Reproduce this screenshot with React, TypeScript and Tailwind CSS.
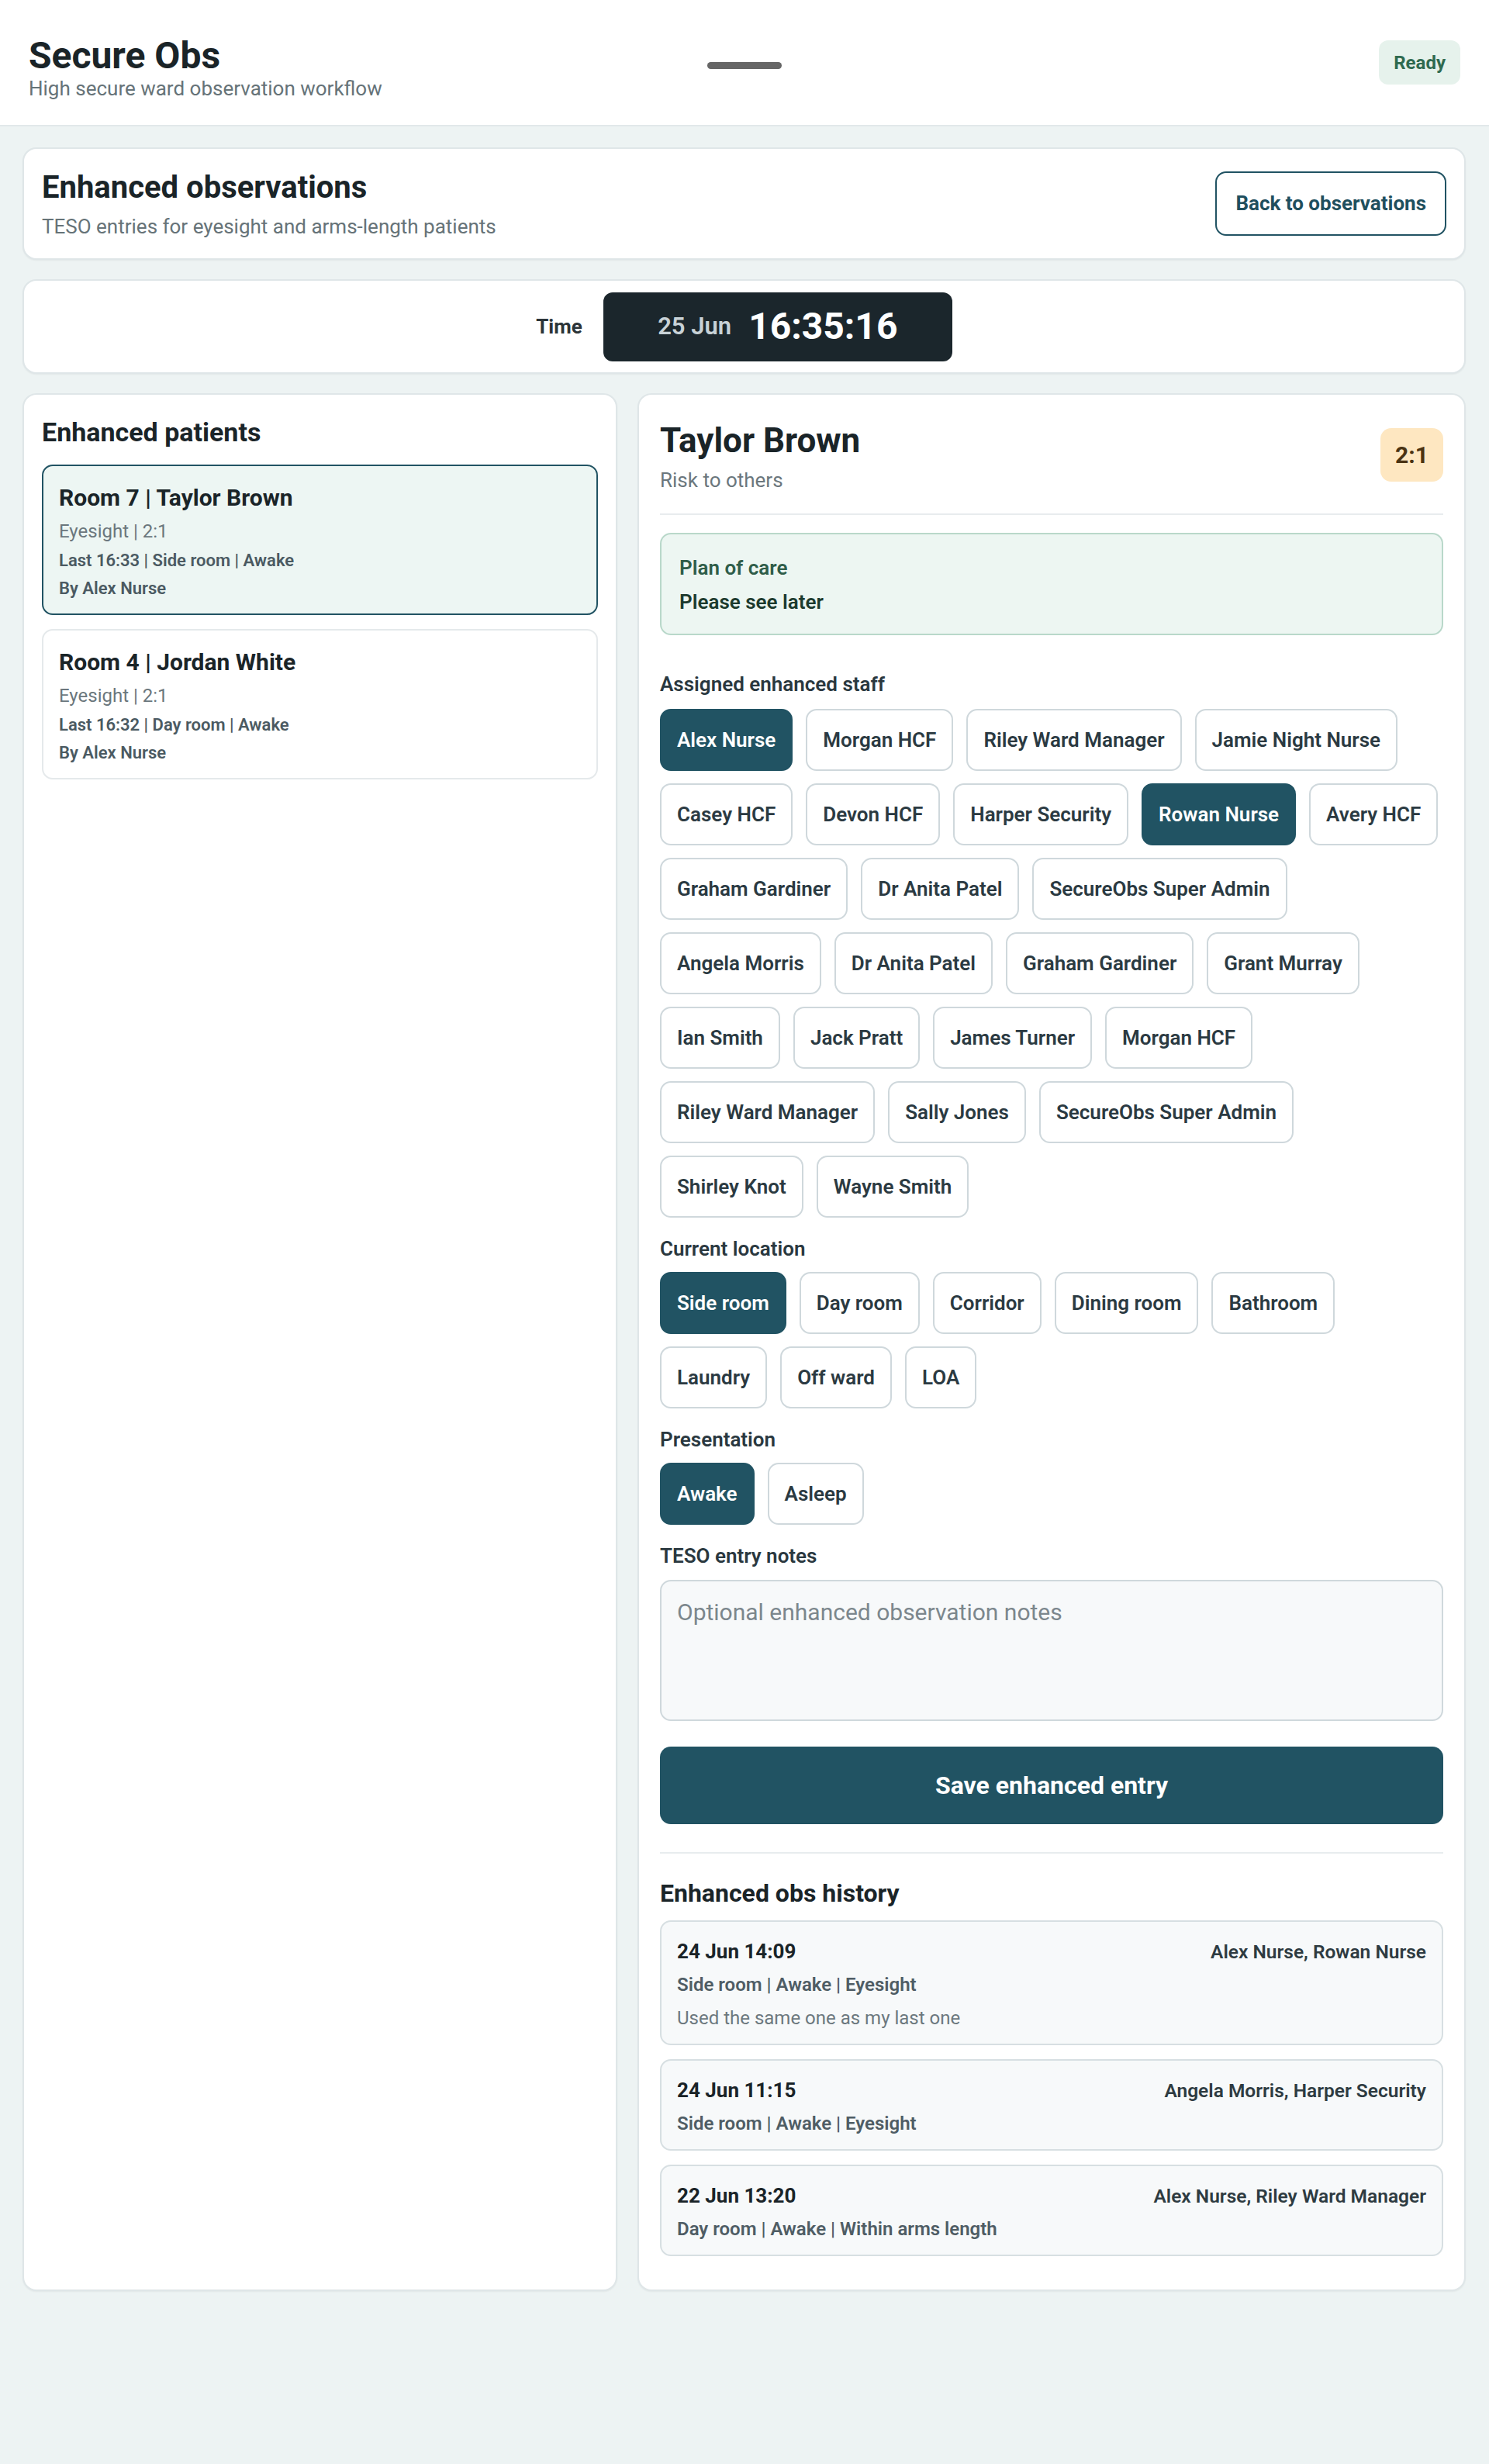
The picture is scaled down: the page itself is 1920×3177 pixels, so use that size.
import React from "react";

type Opt = { label: string; on?: boolean };

const staff: Opt[] = [
  { label: "Alex Nurse", on: true },
  { label: "Morgan HCF" },
  { label: "Riley Ward Manager" },
  { label: "Jamie Night Nurse" },
  { label: "Casey HCF" },
  { label: "Devon HCF" },
  { label: "Harper Security" },
  { label: "Rowan Nurse", on: true },
  { label: "Avery HCF" },
  { label: "Graham Gardiner" },
  { label: "Dr Anita Patel" },
  { label: "SecureObs Super Admin" },
  { label: "Angela Morris" },
  { label: "Dr Anita Patel" },
  { label: "Graham Gardiner" },
  { label: "Grant Murray" },
  { label: "Ian Smith" },
  { label: "Jack Pratt" },
  { label: "James Turner" },
  { label: "Morgan HCF" },
  { label: "Riley Ward Manager" },
  { label: "Sally Jones" },
  { label: "SecureObs Super Admin" },
  { label: "Shirley Knot" },
  { label: "Wayne Smith" },
];

const locations: Opt[] = [
  { label: "Side room", on: true },
  { label: "Day room" },
  { label: "Corridor" },
  { label: "Dining room" },
  { label: "Bathroom" },
  { label: "Laundry" },
  { label: "Off ward" },
  { label: "LOA" },
];

const presentation: Opt[] = [{ label: "Awake", on: true }, { label: "Asleep" }];

const patients = [
  {
    title: "Room 7 | Taylor Brown",
    level: "Eyesight | 2:1",
    last: "Last 16:33 | Side room | Awake",
    by: "By Alex Nurse",
    active: true,
  },
  {
    title: "Room 4 | Jordan White",
    level: "Eyesight | 2:1",
    last: "Last 16:32 | Day room | Awake",
    by: "By Alex Nurse",
    active: false,
  },
];

const history = [
  {
    when: "24 Jun 14:09",
    who: "Alex Nurse, Rowan Nurse",
    meta: "Side room | Awake | Eyesight",
    note: "Used the same one as my last one",
  },
  {
    when: "24 Jun 11:15",
    who: "Angela Morris, Harper Security",
    meta: "Side room | Awake | Eyesight",
  },
  {
    when: "22 Jun 13:20",
    who: "Alex Nurse, Riley Ward Manager",
    meta: "Day room | Awake | Within arms length",
  },
];

function Chip({ label, on }: Opt) {
  return (
    <button
      type="button"
      className={
        on
          ? "h-[80px] rounded-[14px] border-2 border-[#215363] bg-[#215363] px-[20px] text-[26px] font-semibold leading-none text-white"
          : "h-[80px] rounded-[14px] border-2 border-[#cfd8dc] bg-white px-[20px] text-[26px] font-semibold leading-none text-[#2b3a42]"
      }
    >
      {label}
    </button>
  );
}

function ChipGroup({ items }: { items: Opt[] }) {
  return (
    <div className="flex flex-wrap gap-x-[17px] gap-y-[16px]">
      {items.map((o, i) => (
        <Chip key={i} label={o.label} on={o.on} />
      ))}
    </div>
  );
}

function Label({ children, className }: { children: React.ReactNode; className: string }) {
  return (
    <div className={"text-[26px] font-semibold leading-[30px] text-[#2a383f] " + className}>{children}</div>
  );
}

export default function App() {
  return (
    <div className="min-h-screen bg-[#edf3f3] font-['Roboto',sans-serif] text-[#1a2428]">
      <header className="grid h-[163px] grid-cols-[1fr_auto_1fr] border-b-2 border-[#e2e8ea] bg-white px-[37px]">
        <div className="pt-[44px]">
          <h1 className="text-[48px] font-bold leading-[55px] text-[#1a2428]">Secure Obs</h1>
          <p className="text-[26px] leading-[30px] text-[#667378]">High secure ward observation workflow</p>
        </div>
        <div className="mt-[80px] h-[9px] w-[96px] rounded-full bg-[#666666]" />
        <div className="flex items-start justify-end pt-[52px]">
          <span className="flex h-[57px] items-center rounded-[12px] bg-[#e6f2ec] px-[19px] text-[24px] font-bold text-[#2f6a4f]">
            Ready
          </span>
        </div>
      </header>

      <main className="flex flex-col gap-[25px] pl-[29px] pr-[30px] pt-[27px]">
        <section className="flex items-center justify-between rounded-[18px] border-2 border-[#dfe6e8] bg-white px-[23px] py-[26px] shadow-[0_1px_2px_rgba(0,0,0,0.05)]">
          <div>
            <h2 className="text-[40px] font-bold leading-[48px]">Enhanced observations</h2>
            <p className="mt-[11px] text-[26px] leading-[30px] text-[#667378]">
              TESO entries for eyesight and arms-length patients
            </p>
          </div>
          <button
            type="button"
            className="h-[83px] rounded-[14px] border-2 border-[#215363] bg-white px-[24px] text-[26px] font-bold text-[#1f4f5e]"
          >
            Back to observations
          </button>
        </section>

        <section className="flex h-[122px] items-center justify-center gap-[27px] rounded-[18px] border-2 border-[#dfe6e8] bg-white shadow-[0_1px_2px_rgba(0,0,0,0.05)]">
          <span className="text-[26px] font-bold text-[#2b3438]">Time</span>
          <div className="flex h-[89px] w-[450px] items-center justify-center gap-[22px] rounded-[12px] bg-[#1b262c]">
            <span className="text-[31px] font-semibold text-[#c8d2d7]">25 Jun</span>
            <span className="text-[48px] font-bold text-white">16:35:16</span>
          </div>
        </section>

        <div className="grid grid-cols-[767px_1fr] gap-[26px]">
          <aside className="rounded-[18px] border-2 border-[#dfe6e8] bg-white px-[23px] pt-[29px] shadow-[0_1px_2px_rgba(0,0,0,0.05)]">
            <h2 className="text-[34px] font-bold leading-[38px]">Enhanced patients</h2>
            <div className="mt-[23px] flex flex-col gap-[18px]">
              {patients.map((p) => (
                <div
                  key={p.title}
                  className={
                    p.active
                      ? "rounded-[14px] border-2 border-[#215363] bg-[#edf6f3] px-[20px] pb-[18px] pt-[24px]"
                      : "rounded-[14px] border-2 border-[#e5e9eb] bg-white px-[20px] pb-[18px] pt-[24px]"
                  }
                >
                  <div className="text-[30px] font-bold leading-[34px] text-[#1a2428]">{p.title}</div>
                  <div className="mt-[11px] text-[24px] leading-[30px] text-[#6b777d]">{p.level}</div>
                  <div className="mt-[9px] text-[22px] font-semibold leading-[28px] text-[#4b5a62]">{p.last}</div>
                  <div className="mt-[8px] text-[22px] font-semibold leading-[28px] text-[#4b5a62]">{p.by}</div>
                </div>
              ))}
            </div>
          </aside>

          <section className="rounded-[18px] border-2 border-[#dfe6e8] bg-white px-[27px] pb-[43px] pt-[35px] shadow-[0_1px_2px_rgba(0,0,0,0.05)]">
            <div className="flex items-start justify-between">
              <div>
                <h2 className="text-[44px] font-bold leading-[48px]">Taylor Brown</h2>
                <p className="mt-[12px] text-[26px] leading-[30px] text-[#6b777d]">Risk to others</p>
              </div>
              <span className="mt-[8px] flex h-[69px] w-[81px] items-center justify-center rounded-[14px] bg-[#fee7c1] text-[30px] font-bold text-[#4a3313]">
                2:1
              </span>
            </div>

            <div className="mt-[28px] h-[2px] bg-[#e8ecee]" />

            <div className="mt-[23px] rounded-[14px] border-2 border-[#b9d8ca] bg-[#edf6f2] px-[23px] pb-[27px] pt-[29px]">
              <div className="text-[26px] font-semibold leading-[28px] text-[#2f5d49]">Plan of care</div>
              <div className="mt-[16px] text-[26px] font-semibold leading-[28px] text-[#1c3a2e]">Please see later</div>
            </div>

            <Label className="mt-[48px]">Assigned enhanced staff</Label>
            <div className="mt-[17px]">
              <ChipGroup items={staff} />
            </div>

            <Label className="mt-[25px]">Current location</Label>
            <div className="mt-[15px]">
              <ChipGroup items={locations} />
            </div>

            <Label className="mt-[25px]">Presentation</Label>
            <div className="mt-[15px]">
              <ChipGroup items={presentation} />
            </div>

            <Label className="mt-[25px]">TESO entry notes</Label>
            <textarea
              placeholder="Optional enhanced observation notes"
              className="mt-[16px] block h-[182px] w-full resize-none rounded-[14px] border-2 border-[#cfd8dc] bg-[#f7f9fa] px-[20px] pt-[22px] text-[30px] leading-[36px] text-[#1a2428] outline-none placeholder:text-[#7c878d]"
            />

            <button
              type="button"
              className="mt-[33px] h-[100px] w-full rounded-[14px] bg-[#215363] text-[32px] font-bold text-white"
            >
              Save enhanced entry
            </button>

            <div className="mt-[36px] h-[2px] bg-[#e8ecee]" />

            <h3 className="mt-[33px] text-[32px] font-bold leading-[36px]">Enhanced obs history</h3>
            <div className="mt-[17px] flex flex-col gap-[18px]">
              {history.map((h) => (
                <div
                  key={h.when}
                  className="rounded-[14px] border-2 border-[#d7dfe2] bg-[#f7f9fa] px-[20px] pb-[19px] pt-[23px]"
                >
                  <div className="flex items-baseline justify-between">
                    <span className="text-[26px] font-bold leading-[30px] text-[#1a2428]">{h.when}</span>
                    <span className="text-[24.5px] font-semibold leading-[30px] text-[#2e3b41]">{h.who}</span>
                  </div>
                  <div className="mt-[13px] text-[24px] font-semibold leading-[28px] text-[#4f5d65]">{h.meta}</div>
                  {h.note && (
                    <div className="mt-[15px] text-[24px] leading-[28px] text-[#6c787e]">{h.note}</div>
                  )}
                </div>
              ))}
            </div>
          </section>
        </div>
      </main>
    </div>
  );
}
